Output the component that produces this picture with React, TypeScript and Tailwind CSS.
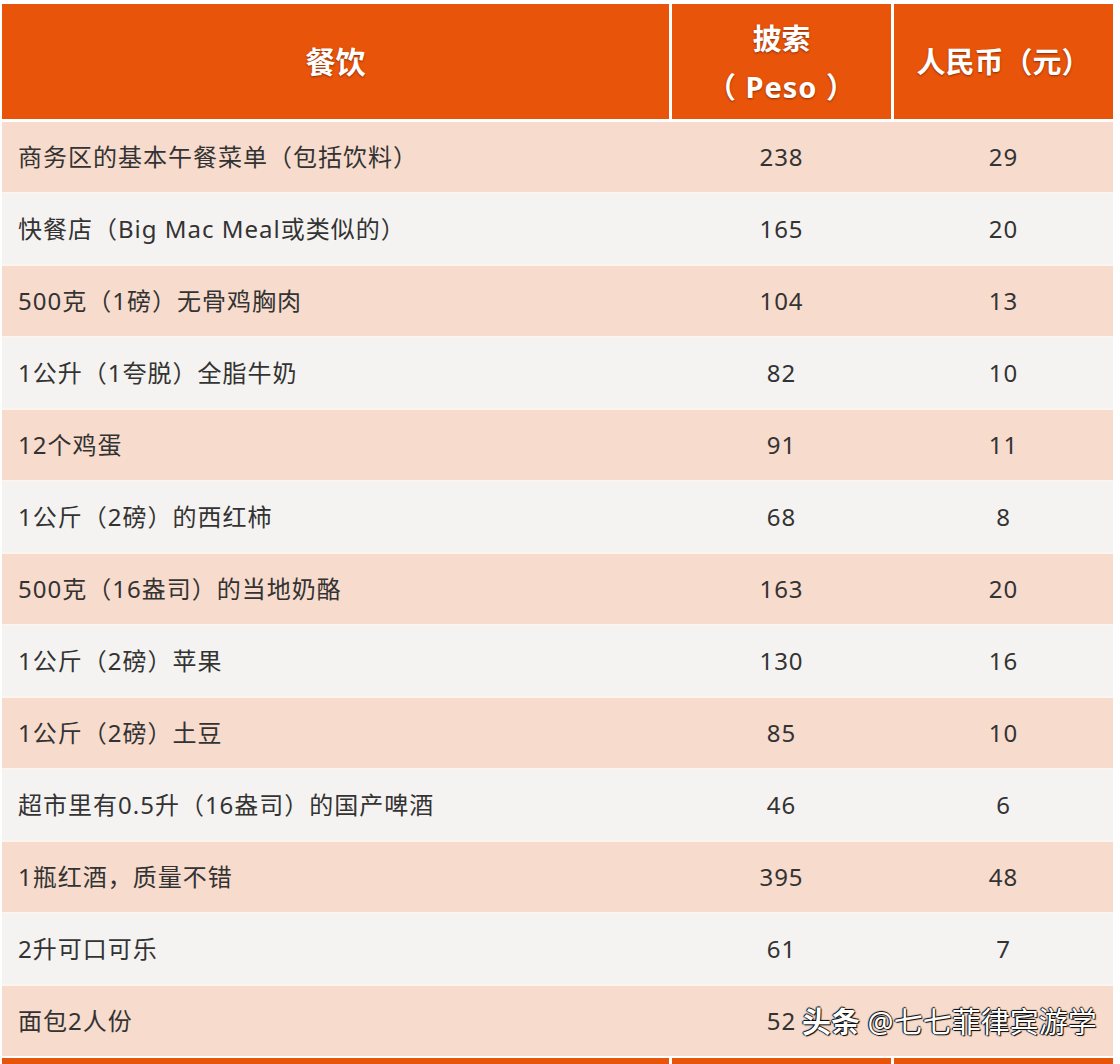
import React from 'react';

const rows: [string, string, string][] = [
  ['商务区的基本午餐菜单（包括饮料）', '238', '29'],
  ['快餐店（Big Mac Meal或类似的）', '165', '20'],
  ['500克（1磅）无骨鸡胸肉', '104', '13'],
  ['1公升（1夸脱）全脂牛奶', '82', '10'],
  ['12个鸡蛋', '91', '11'],
  ['1公斤（2磅）的西红柿', '68', '8'],
  ['500克（16盎司）的当地奶酪', '163', '20'],
  ['1公斤（2磅）苹果', '130', '16'],
  ['1公斤（2磅）土豆', '85', '10'],
  ['超市里有0.5升（16盎司）的国产啤酒', '46', '6'],
  ['1瓶红酒，质量不错', '395', '48'],
  ['2升可口可乐', '61', '7'],
  ['面包2人份', '52', '6'],
];

const font = { fontFamily: '"Noto Sans", "Noto Sans CJK SC", sans-serif' };

export default function App() {
  return (
    <div className="relative h-[1064px] w-[1120px] overflow-hidden bg-white" style={font}>
      <div className="ml-[2px] w-[1111px] pt-[4px]">
        {/* header */}
        <div className="grid h-[115px] grid-cols-[667px_219px_219px] gap-x-[3px] text-white font-bold [text-shadow:0_1px_2px_rgba(80,20,0,0.6)]">
          <div className="flex items-center justify-center bg-[#e8540a] text-[30px]">餐饮</div>
          <div className="flex flex-col items-center justify-center bg-[#e8540a] pt-[2px] text-[29px] leading-[48px]">
            <span>披索</span>
            <span className="tracking-[1px]">（ Peso ）</span>
          </div>
          <div className="flex items-center justify-center bg-[#e8540a] text-[29px]">人民币（元）</div>
        </div>

        <div className="mt-[3px] flex flex-col gap-y-[2px] bg-[#fbf4ef]">
          {rows.map((r, i) => (
            <div
              key={i}
              className={`grid h-[70px] grid-cols-[667px_219px_219px] gap-x-[3px] items-center text-[24px] tracking-[1px] text-[#333333] ${
                i % 2 === 0 ? 'bg-[#f7dbcd]' : 'bg-[#f5f3f1]'
              }`}
            >
              <div className="pl-[16px]">{r[0]}</div>
              <div className="text-center">{r[1]}</div>
              <div className="text-center">{i === rows.length - 1 ? '' : r[2]}</div>
            </div>
          ))}
        </div>

        {/* footer strip */}
        <div className="mt-[2px] grid h-[20px] grid-cols-[667px_219px_219px] gap-x-[3px]">
          <div className="bg-[#e8540a]" />
          <div className="bg-[#e8540a]" />
          <div className="bg-[#e8540a]" />
        </div>
      </div>

      {/* watermark */}
      <div className="absolute left-[802px] top-[1000px] text-[29px] text-white [text-shadow:1px_1px_1px_#000,-1px_0_1px_#000,0_-1px_1px_#000]">
        <span className="font-bold">头条</span> @七七菲律宾游学
      </div>
    </div>
  );
}
